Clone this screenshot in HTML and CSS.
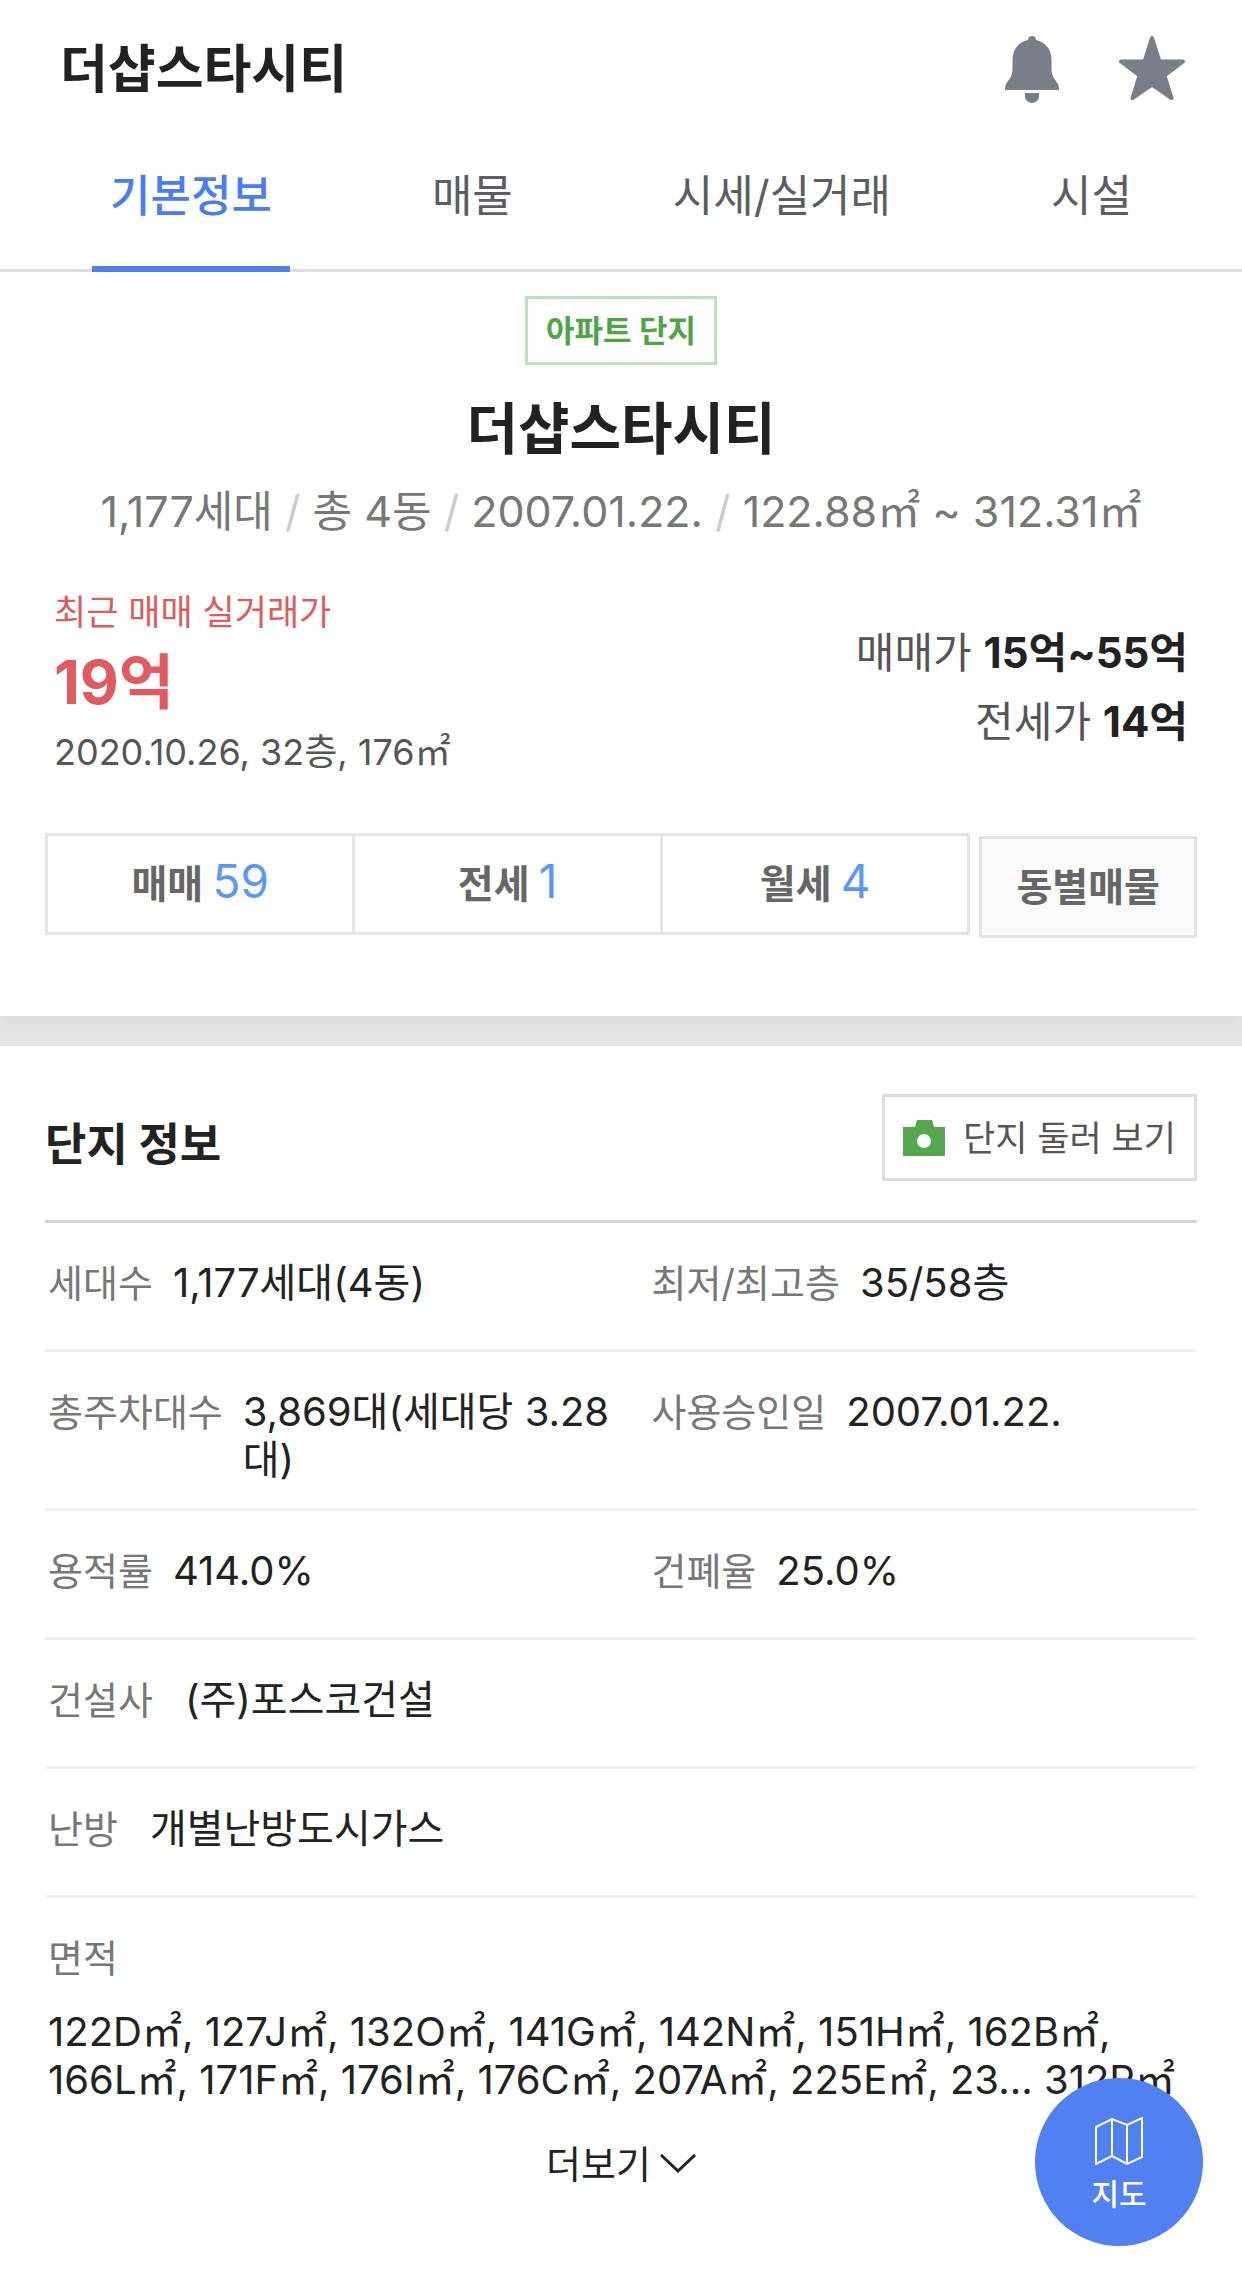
FILE: index.html
```html
<!DOCTYPE html>
<html lang="ko">
<head>
  <meta charset="UTF-8" />
  <meta name="viewport" content="width=device-width, initial-scale=1.0"/>
  <title>더샵스타시티</title>
  <link rel="stylesheet" href="styles.css">
</head>
<body>

  <!-- Header -->
  <header class="header">
    <span class="header-title">더샵스타시티</span>
    <div class="header-buttons">
      <button type="button" class="icon-button" aria-label="알림">
        <svg width="54" height="68" viewBox="0 0 54 68" fill="#797e88">
          <path d="M23 4C23 1.500 25 0 27 0S31 1.500 31 4C40 6 46.500 13 46.500 24V32C46.500 40 49 42 53 48Q54 50 54 54H0Q0 50 1 48C5 42 7.500 40 7.500 32V24C7.500 13 14 6 23 4Z"/>
          <path d="M20 57H34V60.500A7 6.500 0 0 1 20 60.500Z"/>
        </svg>
      </button>
      <button type="button" class="icon-button" aria-label="관심 단지">
        <svg width="66" height="65" viewBox="0 0 66 65" fill="#797e88" stroke="#797e88" stroke-width="4" stroke-linejoin="round">
          <path d="M33 2L40.500 25.500H64L45.500 39.500L52.500 62L33 48.500L13.500 62L20.500 39.500L2 25.500H25.500Z"/>
        </svg>
      </button>
    </div>
  </header>

  <nav class="tabs">
    <a href="#info" class="tab active">기본정보</a>
    <a href="#sale" class="tab">매물</a>
    <a href="#price" class="tab">시세/실거래</a>
    <a href="#facility" class="tab">시설</a>
  </nav>

  <main>
    <!-- Summary -->
    <section class="summary">
      <span class="badge">아파트 단지</span>
      <h1>더샵스타시티</h1>
      <p class="spec">1,177세대 <i>/</i> 총 4동 <i>/</i> 2007.01.22. <i>/</i> 122.88㎡ ~ 312.31㎡</p>

      <div class="prices">
        <div class="recent">
          <p class="recent-label">최근 매매 실거래가</p>
          <p class="recent-price">19억</p>
          <p class="recent-date">2020.10.26, 32층, 176㎡</p>
        </div>
        <div class="range">
          <p>매매가 <strong>15억~55억</strong></p>
          <p>전세가 <strong>14억</strong></p>
        </div>
      </div>

      <div class="deals">
        <div class="deal-group">
          <a href="#sale" class="deal">매매 <em>59</em></a>
          <a href="#sale" class="deal">전세 <em>1</em></a>
          <a href="#sale" class="deal">월세 <em>4</em></a>
        </div>
        <a href="#building" class="building">동별매물</a>
      </div>
    </section>

    <!-- Complex info -->
    <section class="complex" id="info">
      <div class="complex-head">
        <h2>단지 정보</h2>
        <button type="button" class="tour">
          <svg width="42" height="36" viewBox="0 0 42 36">
            <path fill="#54a74b" fill-rule="evenodd" d="M14 0H29L31 7H42V36H0V7H12ZM21 14A7 7 0 1 0 21 28A7 7 0 1 0 21 14Z"/>
          </svg>
          단지 둘러 보기
        </button>
      </div>

      <dl class="rows">
        <div class="row">
          <div class="cell"><dt>세대수</dt><dd>1,177세대(4동)</dd></div>
          <div class="cell"><dt>최저/최고층</dt><dd>35/58층</dd></div>
        </div>
        <div class="row">
          <div class="cell"><dt>총주차대수</dt><dd>3,869대(세대당 3.28대)</dd></div>
          <div class="cell"><dt>사용승인일</dt><dd>2007.01.22.</dd></div>
        </div>
        <div class="row">
          <div class="cell"><dt>용적률</dt><dd>414.0%</dd></div>
          <div class="cell"><dt>건폐율</dt><dd>25.0%</dd></div>
        </div>
        <div class="row">
          <div class="cell wide"><dt>건설사</dt><dd>(주)포스코건설</dd></div>
        </div>
        <div class="row">
          <div class="cell wide"><dt>난방</dt><dd>개별난방도시가스</dd></div>
        </div>
        <div class="row">
          <div class="cell area">
            <dt>면적</dt>
            <dd>122D㎡, 127J㎡, 132O㎡, 141G㎡, 142N㎡, 151H㎡, 162B㎡, <br>166L㎡, 171F㎡, 176I㎡, 176C㎡, 207A㎡, 225E㎡, 23... 312P㎡</dd>
          </div>
        </div>
      </dl>

      <button type="button" class="more">
        더보기
        <svg width="36" height="20" viewBox="0 0 36 20" fill="none" stroke="#222" stroke-width="3">
          <path d="M1 1L18 17L35 1"/>
        </svg>
      </button>
    </section>
  </main>

  <a href="#map" class="map-button">
    <svg width="48" height="48" viewBox="0 0 48 48" fill="none" stroke="#fff" stroke-width="2">
      <path d="M1 10L17 2L32 8L47 1V40L32 47L17 39L1 47ZM17 2V39M32 8V47"/>
    </svg>
    지도
  </a>

</body>
</html>
```
FILE: styles.css
```css
* {
  box-sizing: border-box;
}
body {
  margin: 0;
  background: #fdfdfd;
  color: #222;
  font-family: Inter, "Noto Sans CJK KR", sans-serif;
  font-size: 40px;
  line-height: 48px;
}
h1, h2, p, dl, dd {
  margin: 0;
}
a {
  color: inherit;
  text-decoration: none;
}
button {
  padding: 0;
  border: none;
  background: none;
  color: inherit;
  font: inherit;
  cursor: pointer;
}
svg {
  display: block;
  flex: none;
}

/* header */
.header {
  display: flex;
  justify-content: space-between;
  align-items: center;
  height: 136px;
  padding: 4px 57px 0 60px;
  background: #fff;
}
.header-title {
  font-size: 52px;
  font-weight: 700;
}
.header-buttons {
  display: flex;
  align-items: flex-start;
  gap: 60px;
}
.tabs {
  display: flex;
  justify-content: space-around;
  padding: 0 30px;
  background: #fff;
  border-bottom: 3px solid #dcdee2;
}
.tab {
  margin-bottom: -3px;
  padding: 26px 18px 36px;
  border-bottom: 6px solid transparent;
  color: #5a5d63;
  font-size: 44px;
  line-height: 68px;
}
.tab.active {
  color: #4c7df0;
  border-color: #5080f0;
  font-weight: 500;
}

/* summary */
main {
  background: #e5e5e5;
}
.summary {
  display: flex;
  flex-direction: column;
  align-items: center;
  padding: 24px 45px 78px;
  background: #fff;
  box-shadow: 0 10px 10px rgba(0,0,0,0.03);
}
.badge {
  padding: 9px 18px;
  border: 3px solid #b8e2b8;
  color: #4da644;
  font-size: 31px;
  font-weight: 700;
  line-height: 45px;
}
h1 {
  margin-top: 28px;
  font-size: 56px;
  font-weight: 700;
  line-height: 72px;
}
.spec {
  margin-top: 18px;
  color: #777;
  font-size: 43px;
  line-height: 56px;
}
.spec i {
  color: #ccc;
  font-style: normal;
}
.prices {
  display: flex;
  justify-content: space-between;
  align-items: center;
  align-self: stretch;
  margin-top: 48px;
  padding: 0 9px;
}
.recent {
  display: flex;
  flex-direction: column;
  gap: 5px;
  line-height: 50px;
}
.recent-label {
  color: #e05a60;
  font-size: 35px;
}
.recent-price {
  color: #e05a60;
  font-size: 60px;
  font-weight: 700;
  line-height: 80px;
}
.recent-date {
  color: #555;
  font-size: 36px;
}
.range {
  padding-top: 9px;
  color: #555;
  font-size: 42px;
  line-height: 69px;
  text-align: right;
}
.range strong {
  color: #222;
}
.deals {
  display: flex;
  align-items: flex-end;
  align-self: stretch;
  gap: 9px;
  margin-top: 56px;
  color: #666;
  font-size: 39px;
  font-weight: 700;
  line-height: 96px;
  text-align: center;
}
.deal-group {
  display: flex;
  flex: 1;
  margin-bottom: 3px;
  border: 3px solid #e4e4e4;
}
.deal {
  flex: 1;
}
.deal + .deal {
  border-left: 3px solid #e4e4e4;
}
.deal em {
  color: #5898f8;
  font-size: 46px;
  font-style: normal;
  font-weight: 400;
  line-height: 48px;
}
.building {
  padding: 0 34px;
  border: 3px solid #e4e4e4;
  background: #fafafa;
}

/* complex info */
.complex {
  margin-top: 30px;
  padding: 48px 45px 81px;
  background: #fff;
}
.complex-head {
  display: flex;
  justify-content: space-between;
  align-items: flex-end;
  padding-bottom: 39px;
  border-bottom: 3px solid #d5d5d5;
}
h2 {
  font-size: 45px;
  font-weight: 700;
  line-height: 72px;
}
.tour {
  display: flex;
  align-items: center;
  gap: 18px;
  height: 87px;
  padding: 0 18px;
  border: 3px solid #ddd;
  color: #555;
  font-size: 35px;
}
.row {
  display: grid;
  grid-template-columns: 11fr 10fr;
  align-items: start;
  min-height: 129px;
  padding: 36px 0 24px;
}
.row:first-child {
  min-height: 126px;
}
.row + .row {
  border-top: 3px solid #f0f0f0;
}
.cell {
  display: flex;
  gap: 20px;
  padding: 0 3px;
}
dt {
  flex: none;
  color: #777;
  font-size: 38px;
}
.cell.wide {
  grid-column: span 2;
  gap: 32px;
}
.cell.area {
  grid-column: span 2;
  flex-direction: column;
  gap: 26px;
}
.more {
  display: flex;
  align-items: center;
  gap: 9px;
  margin: 12px auto 0;
  font-size: 38px;
}

/* floating map link */
.map-button {
  position: fixed;
  right: 39px;
  bottom: 30px;
  display: flex;
  flex-direction: column;
  align-items: center;
  gap: 9px;
  width: 168px;
  height: 168px;
  padding-top: 39px;
  border-radius: 50%;
  background: #5080f2;
  color: #fff;
  font-size: 30px;
  font-weight: 500;
  line-height: 40px;
}
```
